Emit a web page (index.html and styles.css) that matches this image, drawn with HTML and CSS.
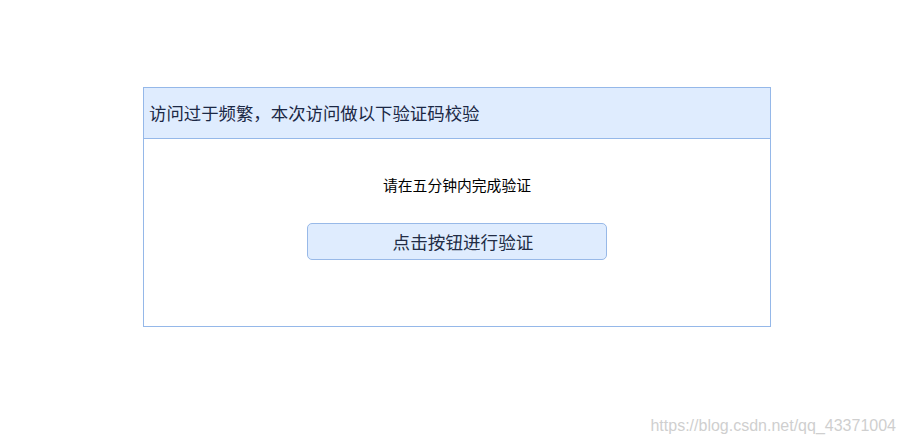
FILE: index.html
```html
<!DOCTYPE html>
<html lang="zh-CN">
<head>
<meta charset="utf-8">
<title>验证</title>
<link rel="stylesheet" href="styles.css">
</head>
<body>
<div class="box">
  <div class="head">访问过于频繁，本次访问做以下验证码校验</div>
  <div class="content">
    <div class="tip">请在五分钟内完成验证</div>
    <button class="btn" type="button">点击按钮进行验证</button>
  </div>
</div>
<div class="watermark">https://blog.csdn.net/qq_43371004</div>
</body>
</html>
```
FILE: styles.css
```css
html, body {
  margin: 0;
  padding: 0;
  background: #fff;
  height: 100%;
}
body {
  font-family: "Noto Sans CJK SC", "Microsoft YaHei", sans-serif;
  position: relative;
  overflow: hidden;
}
.box {
  width: 626px;
  margin: 87px 0 0 143px;
  border: 1px solid #95b8e9;
}
.head {
  height: 50px;
  line-height: 49px;
  padding-left: 5px;
  background: #dfecfe;
  border-bottom: 1px solid #95b8e9;
  font-size: 17.4px;
  color: #1b2845;
  white-space: nowrap;
}
.content {
  display: flex;
  flex-direction: column;
  align-items: center;
  padding: 35px 0 66px;
}
.tip {
  font-size: 14.8px;
  line-height: 22px;
  color: #000;
  margin-bottom: 27px;
}
.btn {
  box-sizing: border-box;
  width: 300px;
  height: 37px;
  margin: 0;
  padding: 0 0 0 12px;
  border: 1px solid #98b9e8;
  border-radius: 5px;
  background: #dfecfe;
  font-family: inherit;
  font-size: 17.6px;
  line-height: 35px;
  color: #222c45;
  cursor: pointer;
}
.watermark {
  position: absolute;
  right: 9px;
  bottom: 9px;
  font-family: "Liberation Sans", Arial, sans-serif;
  font-size: 16px;
  line-height: 18px;
  color: #cfcfcf;
}
```
